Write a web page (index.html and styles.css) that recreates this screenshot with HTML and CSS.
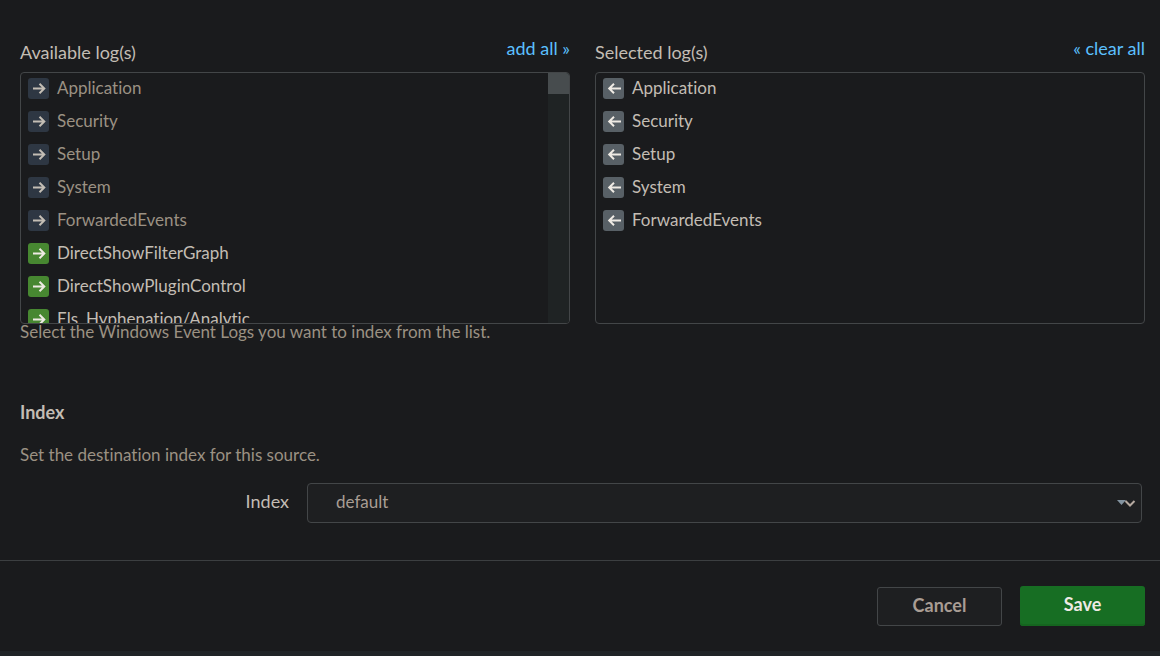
FILE: index.html
```html
<!DOCTYPE html>
<html lang="en">
<head>
<meta charset="utf-8">
<title>Event log input</title>
<link rel="stylesheet" href="styles.css">
</head>
<body>
<svg class="defs" width="0" height="0" aria-hidden="true">
  <symbol id="right" viewBox="0 0 21 21"><path d="M5 10.5H16M11.5 5.7L16.3 10.5L11.5 15.3" fill="none" stroke="currentColor" stroke-width="2"/></symbol>
  <symbol id="left" viewBox="0 0 21 21"><path d="M18 10.5H6.500M11 5.700L6.200 10.500L11 15.300" fill="none" stroke="currentColor" stroke-width="2"/></symbol>
</svg>
<form class="page">
  <main class="content">
    <div class="picker">
      <section class="column">
        <div class="column-head"><h2 class="column-title">Available log(s)</h2><a class="link" href="#">add all »</a></div>
        <div class="box">
          <ul class="logs">
            <li class="log used"><svg class="icon"><use href="#right"/></svg>Application</li>
            <li class="log used"><svg class="icon"><use href="#right"/></svg>Security</li>
            <li class="log used"><svg class="icon"><use href="#right"/></svg>Setup</li>
            <li class="log used"><svg class="icon"><use href="#right"/></svg>System</li>
            <li class="log used"><svg class="icon"><use href="#right"/></svg>ForwardedEvents</li>
            <li class="log free"><svg class="icon"><use href="#right"/></svg>DirectShowFilterGraph</li>
            <li class="log free"><svg class="icon"><use href="#right"/></svg>DirectShowPluginControl</li>
            <li class="log free"><svg class="icon"><use href="#right"/></svg>Els_Hyphenation/Analytic</li>
          </ul>
          <div class="track"><div class="thumb"></div></div>
        </div>
      </section>
      <section class="column">
        <div class="column-head"><h2 class="column-title">Selected log(s)</h2><a class="link" href="#">« clear all</a></div>
        <div class="box">
          <ul class="logs">
            <li class="log"><svg class="icon"><use href="#left"/></svg>Application</li>
            <li class="log"><svg class="icon"><use href="#left"/></svg>Security</li>
            <li class="log"><svg class="icon"><use href="#left"/></svg>Setup</li>
            <li class="log"><svg class="icon"><use href="#left"/></svg>System</li>
            <li class="log"><svg class="icon"><use href="#left"/></svg>ForwardedEvents</li>
          </ul>
        </div>
      </section>
    </div>
    <p class="help">Select the Windows Event Logs you want to index from the list.</p>
    <h3 class="heading">Index</h3>
    <p class="help">Set the destination index for this source.</p>
    <div class="field">
      <label class="label" for="index">Index</label>
      <div class="select-wrap">
        <select class="select" id="index"><option>default</option></select>
        <svg class="arrows" width="20" height="10" viewBox="0 0 20 10"><path d="M0 1H9L4.500 6Z" fill="#8393a0"/><path d="M8.500 2L13 6.500L17.500 2" fill="none" stroke="#b5a9a0" stroke-width="2"/></svg>
      </div>
    </div>
  </main>
  <footer class="actions">
    <button class="button cancel" type="button">Cancel</button>
    <button class="button save" type="submit">Save</button>
  </footer>
</form>
</body>
</html>
```
FILE: styles.css
```css
* { box-sizing: border-box; }
body {
  margin: 0;
  background: #1a1b1d;
  color: #c3bdb4;
  font: 18px/24px Lato, "Open Sans", sans-serif;
  font-variant-ligatures: none;
}
.defs { position: absolute; }
.page {
  display: flex;
  flex-direction: column;
  min-height: 100vh;
  border-bottom: 5px solid #202427;
}
.content { padding: 36px 15px 37px 20px; }
.picker { display: grid; grid-template-columns: 1fr 1fr; gap: 25px; }
.column { min-width: 0; }
.column-head {
  display: flex;
  justify-content: space-between;
  align-items: flex-start;
  height: 36px;
}
.column-title { margin: 4px 0 0; font-size: 18px; font-weight: 400; }
.link { color: #5cc0ff; text-decoration: none; }
.box {
  display: flex;
  height: 252px;
  border: 1px solid #434648;
  border-radius: 4px;
  overflow: hidden;
}
.logs {
  flex: 1;
  display: flex;
  flex-direction: column;
  gap: 12px;
  margin: 0;
  padding: 5px 7px;
  list-style: none;
}
.log {
  display: flex;
  flex: none;
  gap: 8px;
  height: 21px;
  font-size: 17px;
  line-height: 20px;
}
.icon {
  width: 21px;
  height: 21px;
  border-radius: 3px;
  background: #586066;
  color: #eeeae4;
}
.used { color: #9b9183; }
.used .icon { background: #2e3743; color: #c3bdb4; }
.free .icon { background: #478731; color: #eeeae4; }
.track { width: 21px; background: #1f2324; }
.thumb { height: 21px; background: #474c4e; }
.help { margin: 0; color: #9b9183; font-size: 17px; line-height: 16px; }
.heading { margin: 60px 0 23px; font-size: 18px; font-weight: 700; line-height: 24px; }
.field { display: flex; gap: 18px; margin: 20px 3px 0 0; }
.label { flex: 0 0 269px; line-height: 36px; text-align: right; }
.select-wrap { flex: 1; position: relative; display: flex; }
.select {
  width: 100%;
  height: 40px;
  padding: 0 28px 2px;
  appearance: none;
  border: 1px solid #434648;
  border-radius: 4px;
  background: #1e1f21;
  color: #a99d94;
  font: inherit;
  font-size: 17px;
}
.arrows { position: absolute; right: 5px; top: 16px; pointer-events: none; }
.actions {
  display: flex;
  justify-content: flex-end;
  align-items: flex-end;
  gap: 18px;
  padding: 25px 15px;
  border-top: 1px solid #3c3f41;
}
.button {
  width: 125px;
  height: 39px;
  padding: 0 0 4px;
  border: 1px solid #434648;
  border-radius: 3px;
  background: #1e1f21;
  color: #a99d94;
  font: inherit;
  font-weight: 700;
}
.save {
  height: 40px;
  border: 0;
  background: #176e23;
  color: #eeeae4;
  box-shadow: inset 0 -2px 0 #15651f;
}
```
